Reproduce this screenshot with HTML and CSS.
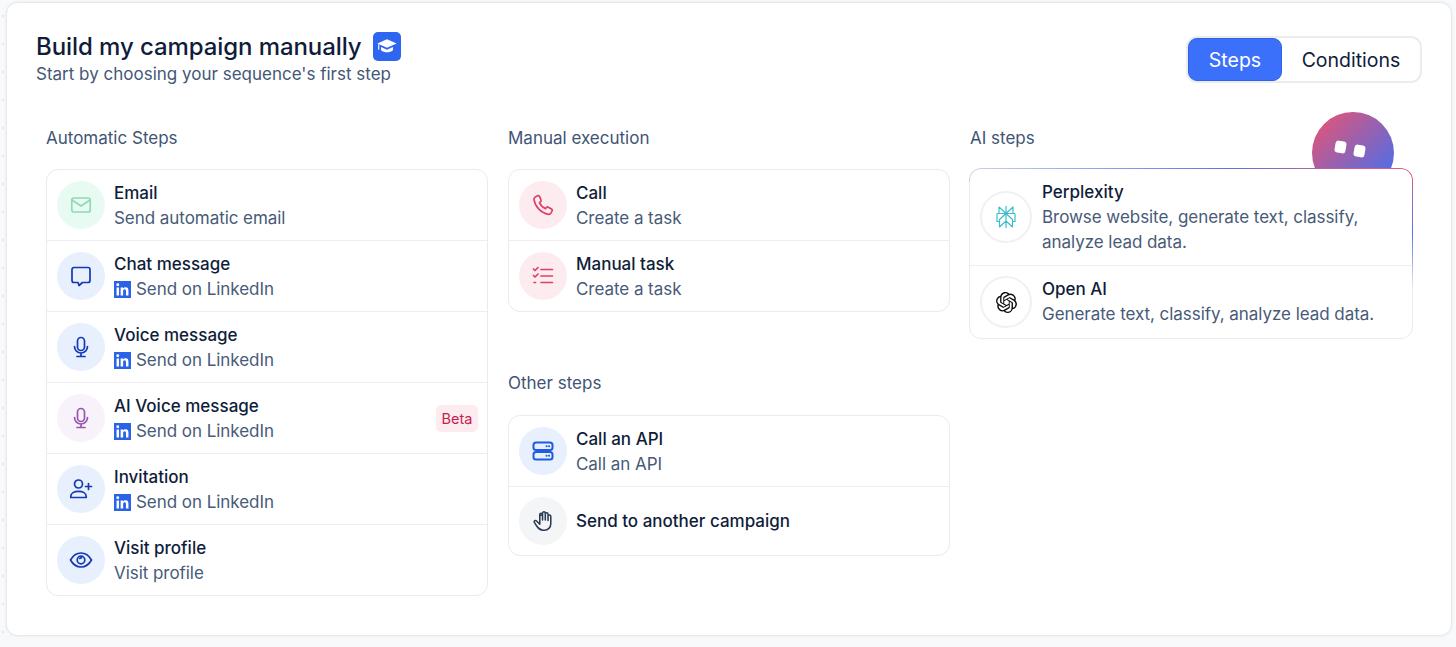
FILE: index.html
```html
<!DOCTYPE html>
<html lang="en">
<head>
<meta charset="utf-8">
<title>Build my campaign manually</title>
<link rel="stylesheet" href="styles.css">
</head>
<body>
<main class="card">
  <header class="head">
    <div class="head-text">
      <h1 class="title">Build my campaign manually
        <span class="cap"><svg viewBox="0 0 24 24" width="22" height="22" fill="#fff"><path d="M12 4.500 1.500 9.200 12 14l10.500-4.800z"/><path d="M5.500 13v3.600c1.800 1.500 4 2.300 6.500 2.300s4.700-.8 6.500-2.300V13L12 16z"/><path d="M3 10v6" stroke="#fff" stroke-width="1.200"/></svg></span>
      </h1>
      <p class="sub">Start by choosing your sequence's first step</p>
    </div>
    <div class="toggle">
      <span class="tab tab-on">Steps</span>
      <span class="tab">Conditions</span>
    </div>
  </header>

  <div class="cols">
    <section class="col">
      <h2 class="heading">Automatic Steps</h2>
      <ul class="list">
        <li class="row">
          <span class="ic ic-green"><svg viewBox="0 0 24 24" width="24" height="24" class="st" stroke="#8fd9b6"><rect x="2.800" y="5" width="18.400" height="14" rx="2"/><path d="m3 7 9 6 9-6"/></svg></span>
          <div class="txt"><div class="name">Email</div><div class="desc">Send automatic email</div></div>
        </li>
        <li class="row">
          <span class="ic ic-blue"><svg viewBox="0 0 24 24" width="24" height="24" class="st" stroke="#1339b5"><path d="M5 3.500h14a2 2 0 0 1 2 2v11a2 2 0 0 1-2 2h-5.500L10 21.500l-1-3H5a2 2 0 0 1-2-2v-11a2 2 0 0 1 2-2z"/></svg></span>
          <div class="txt"><div class="name">Chat message</div><div class="desc"><svg class="li" viewBox="0 0 24 24" width="17" height="17"><rect width="24" height="24" fill="#2a62e8"/><path fill="#fff" d="M20.400 20.400h-3.500v-5.600c0-1.300 0-3-1.900-3s-2.100 1.400-2.100 2.900v5.700H9.350V9h3.400v1.600h.05c.5-.9 1.600-1.900 3.400-1.900 3.600 0 4.200 2.400 4.200 5.500zM5.300 7.400a2.050 2.050 0 1 1 0-4.100 2.050 2.050 0 0 1 0 4.100zm1.800 13H3.600V9h3.500z"/></svg>Send on LinkedIn</div></div>
        </li>
        <li class="row">
          <span class="ic ic-blue"><svg viewBox="0 0 24 24" width="24" height="24" class="st" stroke="#1339b5"><rect x="8.500" y="2.500" width="7" height="13" rx="3.500"/><path d="M5.500 11.500a6.500 6.500 0 0 0 13 0M12 18v3.500M8 21.500h8"/></svg></span>
          <div class="txt"><div class="name">Voice message</div><div class="desc"><svg class="li" viewBox="0 0 24 24" width="17" height="17"><rect width="24" height="24" fill="#2a62e8"/><path fill="#fff" d="M20.400 20.400h-3.500v-5.600c0-1.300 0-3-1.900-3s-2.100 1.400-2.100 2.900v5.700H9.350V9h3.400v1.600h.05c.5-.9 1.600-1.900 3.400-1.900 3.600 0 4.200 2.400 4.200 5.500zM5.300 7.400a2.050 2.050 0 1 1 0-4.100 2.050 2.050 0 0 1 0 4.100zm1.800 13H3.600V9h3.500z"/></svg>Send on LinkedIn</div></div>
        </li>
        <li class="row">
          <span class="ic ic-lilac"><svg viewBox="0 0 24 24" width="24" height="24" class="st" stroke="#9a55ae"><rect x="8.500" y="2.500" width="7" height="13" rx="3.500"/><path d="M5.500 11.500a6.500 6.500 0 0 0 13 0M12 18v3.500M8 21.500h8"/></svg></span>
          <div class="txt"><div class="name">AI Voice message</div><div class="desc"><svg class="li" viewBox="0 0 24 24" width="17" height="17"><rect width="24" height="24" fill="#2a62e8"/><path fill="#fff" d="M20.400 20.400h-3.500v-5.600c0-1.300 0-3-1.900-3s-2.100 1.400-2.100 2.900v5.700H9.350V9h3.400v1.600h.05c.5-.9 1.600-1.900 3.400-1.900 3.600 0 4.200 2.400 4.200 5.500zM5.300 7.400a2.050 2.050 0 1 1 0-4.100 2.050 2.050 0 0 1 0 4.100zm1.800 13H3.600V9h3.500z"/></svg>Send on LinkedIn</div></div>
          <span class="beta">Beta</span>
        </li>
        <li class="row">
          <span class="ic ic-blue"><svg viewBox="0 0 24 24" width="24" height="24" class="st" stroke="#1339b5"><circle cx="9.500" cy="7" r="4"/><path d="M1.800 20.500v-1.200c0-3.200 3.400-5 7.700-5s7.700 1.800 7.700 5v1.200zM19.500 6.500v6M16.500 9.500h6"/></svg></span>
          <div class="txt"><div class="name">Invitation</div><div class="desc"><svg class="li" viewBox="0 0 24 24" width="17" height="17"><rect width="24" height="24" fill="#2a62e8"/><path fill="#fff" d="M20.400 20.400h-3.500v-5.600c0-1.300 0-3-1.900-3s-2.100 1.400-2.100 2.900v5.700H9.350V9h3.400v1.600h.05c.5-.9 1.600-1.900 3.400-1.900 3.600 0 4.200 2.400 4.200 5.500zM5.300 7.400a2.050 2.050 0 1 1 0-4.100 2.050 2.050 0 0 1 0 4.100zm1.800 13H3.600V9h3.500z"/></svg>Send on LinkedIn</div></div>
        </li>
        <li class="row">
          <span class="ic ic-blue"><svg viewBox="0 0 24 24" width="24" height="24" class="st" stroke="#1339b5"><path d="M1.500 12C4 7.500 7.800 5 12 5s8 2.500 10.500 7c-2.500 4.500-6.300 7-10.500 7S4 16.500 1.500 12z"/><circle cx="12" cy="12" r="3.800"/><path d="M10.800 10.500a2 2 0 0 1 1.600-.6"/></svg></span>
          <div class="txt"><div class="name">Visit profile</div><div class="desc">Visit profile</div></div>
        </li>
      </ul>
    </section>

    <section class="col">
      <h2 class="heading">Manual execution</h2>
      <ul class="list">
        <li class="row">
          <span class="ic ic-pink"><svg viewBox="0 0 24 24" width="24" height="24" class="st" stroke="#df3f68"><path d="M6.500 2.800 4.300 4a2.500 2.500 0 0 0-1.300 2.500c.5 3.700 2.300 7 4.800 9.700 2.700 2.700 6 4.600 9.600 5.100a2.500 2.500 0 0 0 2.500-1.200l1.200-2.200a1.500 1.500 0 0 0-.6-2l-3.200-1.700a1.500 1.500 0 0 0-1.800.3l-1 1.100c-2.800-1.200-4.800-3.400-6-6l1.100-1c.5-.5.7-1.200.4-1.800L8.500 3.400a1.500 1.500 0 0 0-2-.6z"/></svg></span>
          <div class="txt"><div class="name">Call</div><div class="desc">Create a task</div></div>
        </li>
        <li class="row">
          <span class="ic ic-pink"><svg viewBox="0 0 24 24" width="24" height="24" class="st" stroke="#df3f68"><path d="M10 5.500h11.500M10 12h11.500M10 18.500h11.500M2.500 5 4 6.500l3-3M2.500 11.500 4 13l3-3M3 18.500h1.500"/></svg></span>
          <div class="txt"><div class="name">Manual task</div><div class="desc">Create a task</div></div>
        </li>
      </ul>

      <h2 class="heading heading-next">Other steps</h2>
      <ul class="list">
        <li class="row">
          <span class="ic ic-blue"><svg viewBox="0 0 24 24" width="24" height="24" class="st st-b" stroke="#1f5ae0"><rect x="2.500" y="3.500" width="19" height="7.500" rx="2.500"/><rect x="2.500" y="13" width="19" height="7.500" rx="2.500"/><path d="M15.500 7.200h.1M18 7.200h.1M15.500 16.700h.1M18 16.700h.1"/></svg></span>
          <div class="txt"><div class="name">Call an API</div><div class="desc">Call an API</div></div>
        </li>
        <li class="row">
          <span class="ic ic-grey"><svg viewBox="0 0 24 24" width="22" height="22" class="st" stroke="#2c3c56"><path d="M8.500 11.500V5a1.500 1.500 0 0 1 3 0v6M11.500 10.500V3.500a1.500 1.500 0 0 1 3 0v7M14.500 11V4.500a1.500 1.500 0 0 1 3 0V11M17.500 11.500V7a1.500 1.500 0 0 1 3 0v8c0 4-3 7-7 7h-1.500c-3 0-4.800-1.500-6.500-4l-3-4.500c-.8-1.500 1.300-2.800 2.500-1.500l3.500 3.500V7a1.500 1.500 0 0 1 2-1.400"/></svg></span>
          <div class="name">Send to another campaign</div>
        </li>
      </ul>
    </section>

    <section class="col col-ai">
      <h2 class="heading">AI steps</h2>
      <div class="bot"><span class="eye eye-l"></span><span class="eye eye-r"></span></div>
      <ul class="list list-ai">
        <li class="row row-ai">
          <span class="ic ic-white"><svg viewBox="0 0 24 24" width="24" height="24" fill="none" stroke="#3fbccb" stroke-width="1.200" stroke-linejoin="round"><path d="M12 1v22M5 2l7 6.500L19 2v6.500H5zM3 8.500v8h2.500M21 8.500v8h-2.500M3 8.500h18M12 8.500l-6.500 6V22l6.500-6M12 8.500l6.500 6V22L12 16"/></svg></span>
          <div class="txt"><div class="name">Perplexity</div><div class="desc">Browse website, generate text, classify,<br>analyze lead data.</div></div>
        </li>
        <li class="row row-ai">
          <span class="ic ic-white"><svg viewBox="0 0 24 24" width="21" height="21" fill="#0b0b0b"><path d="M22.282 9.821a5.985 5.985 0 0 0-.516-4.911 6.046 6.046 0 0 0-6.510-2.900A6.065 6.065 0 0 0 4.981 4.182a5.985 5.985 0 0 0-3.998 2.900 6.046 6.046 0 0 0 .743 7.097 5.980 5.980 0 0 0 .511 4.911 6.051 6.051 0 0 0 6.515 2.900A5.985 5.985 0 0 0 13.260 24a6.056 6.056 0 0 0 5.772-4.206 5.989 5.989 0 0 0 3.998-2.900 6.056 6.056 0 0 0-.748-7.073zm-9.022 12.608a4.476 4.476 0 0 1-2.876-1.041l.142-.080 4.778-2.758a.795.795 0 0 0 .393-.682v-6.737l2.020 1.169a.071.071 0 0 1 .038.052v5.583a4.504 4.504 0 0 1-4.495 4.494zm-9.661-4.125a4.471 4.471 0 0 1-.535-3.014l.142.085 4.783 2.758a.771.771 0 0 0 .781 0l5.843-3.368v2.332a.080.080 0 0 1-.033.062L9.740 19.950a4.499 4.499 0 0 1-6.141-1.646zM2.341 7.896a4.485 4.485 0 0 1 2.366-1.973V11.600a.766.766 0 0 0 .388.677l5.814 3.354-2.020 1.169a.076.076 0 0 1-.071 0l-4.830-2.787A4.504 4.504 0 0 1 2.340 7.872zm16.596 3.856L13.104 8.364 15.119 7.200a.076.076 0 0 1 .071 0l4.830 2.791a4.494 4.494 0 0 1-.676 8.105v-5.678a.790.790 0 0 0-.407-.667zm2.011-3.023-.142-.085-4.774-2.782a.776.776 0 0 0-.785 0L9.409 9.230V6.897a.066.066 0 0 1 .028-.061l4.830-2.787a4.499 4.499 0 0 1 6.680 4.660zM8.307 12.863l-2.020-1.164a.080.080 0 0 1-.038-.057V6.074a4.499 4.499 0 0 1 7.376-3.454l-.142.081L8.704 5.459a.795.795 0 0 0-.393.681zm1.097-2.365 2.602-1.500 2.607 1.500v2.999l-2.597 1.500-2.607-1.500z"/></svg></span>
          <div class="txt"><div class="name">Open AI</div><div class="desc">Generate text, classify, analyze lead data.</div></div>
        </li>
      </ul>
    </section>
  </div>
</main>
</body>
</html>
```
FILE: styles.css
```css
* { box-sizing: border-box; }
html, body { height: 100%; }
body {
  margin: 0;
  overflow: hidden;
  background-color: #f8f9fa;
  background-image: radial-gradient(circle, #e6e8ea 1.2px, transparent 1.6px);
  background-size: 28px 28px;
  background-position: -11px 2px;
  font-family: Inter, "Liberation Sans", sans-serif;
  color: #0f1d3a;
}
.card {
  margin: 3px 5px 0 7px;
  height: 632px;
  background: #fff;
  border-radius: 10px;
  box-shadow: 0 0 3px rgba(20, 30, 50, .2);
  padding: 29px 29px 0;
}
.head { display: flex; justify-content: space-between; align-items: flex-start; }
.title {
  margin: 0;
  font-size: 24px;
  line-height: 30px;
  font-weight: 450;
  letter-spacing: -.08px;
  display: flex;
  align-items: center;
  gap: 11px;
}
.cap {
  width: 28px;
  height: 29px;
  margin-top: -2px;
  border-radius: 5px;
  background: #2f66f0;
  display: flex;
  align-items: center;
  justify-content: center;
}
.sub { margin: 0; font-size: 17px; line-height: 25px; color: #435776; }
.toggle {
  display: flex;
  margin-top: 4px;
  border: 2px solid #ececef;
  border-radius: 11px;
  height: 47px;
}
.tab {
  display: flex;
  align-items: center;
  justify-content: center;
  font-size: 19.5px;
  font-weight: 400;
  width: 138px;
}
.tab-on {
  width: 94px;
  background: #3b70fb;
  color: #fff;
  border-radius: 9px;
  border: 1px solid #2f62e6;
}
.cols {
  display: grid;
  grid-template-columns: repeat(3, 442px);
  gap: 20px;
  margin: 39px 9px 0 10px;
}
.col { position: relative; min-width: 0; }
.heading {
  margin: 0 0 19px;
  font-size: 17px;
  line-height: 24px;
  font-weight: 400;
  color: #3f5475;
}
.heading-next { margin-top: 59px; margin-bottom: 20px; }
.list {
  list-style: none;
  margin: 0;
  padding: 0;
  border: 1px solid #e9ebee;
  border-radius: 12px;
  background: #fff;
}
.row {
  display: flex;
  align-items: center;
  gap: 9px;
  padding: 10px;
  border-bottom: 1px solid #eceef1;
}
.row:last-child { border-bottom: 0; }
.ic {
  flex: none;
  width: 48px;
  height: 48px;
  border-radius: 50%;
  display: flex;
  align-items: center;
  justify-content: center;
}
.ic-green { background: #e8fbf3; }
.ic-blue { background: #e8f0fd; }
.ic-lilac { background: #f8f3fb; }
.ic-pink { background: #fdecef; }
.ic-grey { background: #f4f5f6; }
.ic-white { width: 52px; height: 52px; background: #fff; border: 2px solid #f0f1f3; }
.st { fill: none; stroke-width: 1.700; stroke-linecap: round; stroke-linejoin: round; }
.st-b { stroke-width: 2; }
.txt { flex: 1; min-width: 0; padding-top: 1px; margin-bottom: -1px; }
.name { font-size: 17px; line-height: 25px; font-weight: 450; color: #0f1d3a; }
.desc { font-size: 17px; line-height: 25px; letter-spacing: -.05px; color: #475a78; display: flex; align-items: center; gap: 5px; flex-wrap: wrap; }
.li { flex: none; }
.beta {
  flex: none;
  font-size: 14.5px;
  line-height: 27px;
  padding: 0 5.5px;
  margin-right: -1px;
  border-radius: 5px;
  background: #fdecef;
  color: #c4204f;
}
.col-ai .heading { margin-bottom: 18px; }
.list-ai { position: relative; margin: 0 -1px; }
.list-ai::before {
  content: "";
  position: absolute;
  inset: -1px;
  border-radius: 12px;
  padding: 1px;
  background:
    linear-gradient(to left, #e2587e 0, #e2587e 10%, #5a74e6 42%, rgba(110, 130, 235, .25) 100%) top / 100% 14px no-repeat,
    linear-gradient(to bottom, #e2587e 0, #8f6bcc 30%, #5a74e6 55%, rgba(90, 116, 230, 0) 100%) top right / 14px 70% no-repeat;
  -webkit-mask: linear-gradient(#000 0 0) content-box, linear-gradient(#000 0 0);
  -webkit-mask-composite: xor;
  mask-composite: exclude;
  pointer-events: none;
}
.row-ai { gap: 10px; padding: 10px; }
.row-ai .txt { padding-top: 0; margin-bottom: 0; }
.row-ai:first-child .txt { padding-top: 1px; margin-bottom: 0; }
.bot {
  position: absolute;
  left: 342px;
  top: -14px;
  width: 82px;
  height: 82px;
  border-radius: 50%;
  background: linear-gradient(135deg, #d9567f 12%, #4f6ee6 85%);
}
.eye {
  position: absolute;
  width: 11px;
  height: 12px;
  border-radius: 3px;
  background: #fff;
  transform: rotate(10deg);
}
.eye-l { left: 23px; top: 29px; }
.eye-r { left: 42px; top: 33px; }
```
